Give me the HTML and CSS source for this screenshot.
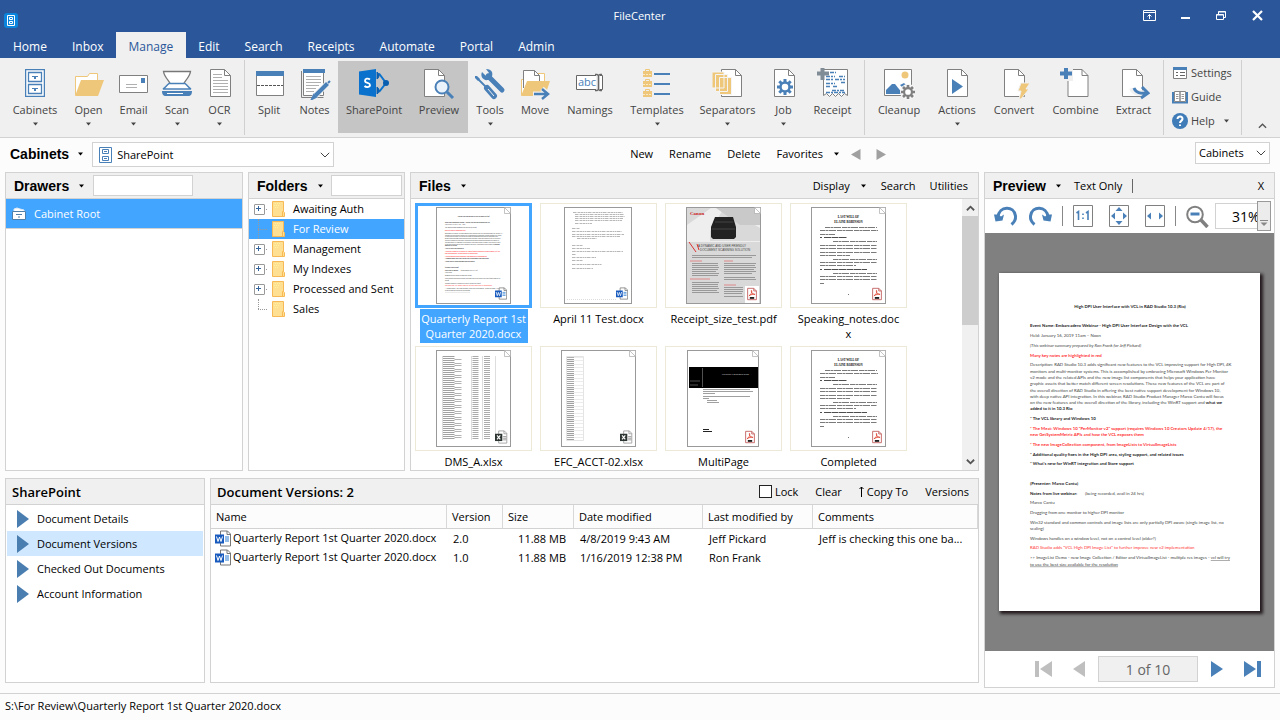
FILE: index.html
```html
<!DOCTYPE html>
<html lang="en">
<head>
<meta charset="utf-8">
<title>FileCenter</title>
<link rel="stylesheet" href="styles.css">
</head>
<body>
<svg class="defs" aria-hidden="true">
  <symbol id="doc" viewBox="0 0 32 32"><path d="M6.500 1.500h14l6 6v21h-20z" fill="#fff" stroke="#808080"/><path d="M20.500 1.500v6h6" fill="none" stroke="#808080"/></symbol>
  <symbol id="cabinet" viewBox="0 0 20 28"><path d="M.5.5h19v27H.5z" fill="#fff" stroke="#4a80b8" stroke-width="1.500"/><path d="M3.500 3.500h13v9h-13zM3.500 15.500h13v9h-13z" fill="#fff" stroke="#4a80b8" stroke-width="1.300"/><path d="M7 7.500h6M7 19.500h6" stroke="#4a80b8"/><path d="M9 8h2v2H9zM9 20h2v2H9z" fill="#4a80b8"/></symbol>
  <symbol id="cabinet-small" viewBox="0 0 13 16"><path d="M.5.500h12v15H.5zM3.500 2.500h6v4h-6zM3.500 9.500h6v4h-6zM5 4.500h3M5 11.500h3" fill="#fff" stroke="#4a80b8"/></symbol>
  <symbol id="gear" viewBox="-8 -8 16 16"><g stroke="currentColor" stroke-width="3"><path d="M0-8V8M-8 0H8M-5.700-5.700 5.700 5.700M-5.700 5.700 5.700-5.700"/></g><circle r="4.500" fill="#fff" stroke="currentColor" stroke-width="2.500"/></symbol>
  <symbol id="caret" viewBox="0 0 7 4"><path d="M1 .5h5L3.500 3.500z" fill="currentColor"/></symbol>
  <symbol id="chev" viewBox="0 0 10 6"><path d="M.8.8 5 5 9.200.8" fill="none" stroke="#444"/></symbol>
  <symbol id="folder" viewBox="0 0 13 16"><path d="M.5.500h11v10l1 1v4h-12z" fill="#ffdf91" stroke="#f6b955"/><path d="M11.500 10.500h-1v5" fill="none" stroke="#f6b955"/><path d="M3 2.500h6M2 4.500h6M3 6.500h3" stroke="#fff3a0" stroke-dasharray="1 1"/></symbol>
  <symbol id="word" viewBox="0 0 16 16"><path d="M5.500.500h7l3 3v12h-10z" fill="#fff" stroke="#777"/><path d="M12 .500v3.500h3.500" fill="none" stroke="#777"/><path d="M10 6.500h4M10 8.500h4M10 10.500h4" stroke="#2b7cd3"/><path d="M0 4h9v9H0z" fill="#185abd"/><path d="m1.500 6 1.500 5 1.500-4.500L6 11l1.500-5" fill="none" stroke="#fff"/></symbol>
  <symbol id="excel" viewBox="0 0 16 16"><path d="M4.500.500h7l3 3v12h-10z" fill="#fff" stroke="#999"/><path d="M11 .500v3.500h3.500" fill="none" stroke="#999"/><path d="M10 7.500h4M10 9.500h4M10 11.500h4" stroke="#888"/><path d="M0 4h9v9H0z" fill="#2d3533"/><path d="m2.500 6 4 5m0-5-4 5" stroke="#fff" stroke-width="1.400"/></symbol>
  <symbol id="pdf" viewBox="0 0 13 16"><path d="M1.500 1.500h7l3 3v10h-10z" fill="#fff" stroke="#c25b5b"/><path d="M8.500 1.500v3h3" fill="none" stroke="#c25b5b"/><path d="M3 10c2-1 4-4 3-6-1-1 0 5 4 4.500C8 7.500 5 9 3 10" fill="none" stroke="#e04b3a"/><path d="M4 12.500h5" stroke="#111" stroke-width="2"/></symbol>
  <symbol id="corner" viewBox="0 0 7 7"><path d="M.5.500h6v6h-6zM.5.500l6 6" fill="#fff" stroke="#aaa" stroke-width=".7"/></symbol>
  <symbol id="report" viewBox="0 0 783 1014">
    <g class="doc-text">
      <text x="393" y="105" text-anchor="middle" class="b">High DPI User Interface with VCL in RAD Studio 10.3 (Rio)</text>
      <text x="93" y="163" class="b">Event Name: Embarcadero Webinar - High DPI User Interface Design with the VCL</text>
      <text x="93" y="193">Held: January 16, 2019 11am – Noon</text>
      <text x="93" y="222" class="i">(This webinar summary prepared by Ron Frank for Jeff Pickard)</text>
      <text x="93" y="251" class="b red">Many key notes are highlighted in red</text>
      <text x="93" y="280">Description: RAD Studio 10.3 adds significant new features to the VCL improving support for High DPI, 4K</text>
      <text x="93" y="299">monitors and multi-monitor systems. This is accomplished by embracing Microsoft Windows Per Monitor</text>
      <text x="93" y="318">v2 mode and the related APIs and the new image list components that helps your application have</text>
      <text x="93" y="337">graphic assets that better match different screen resolutions. These new features of the VCL are part of</text>
      <text x="93" y="356">the overall direction of RAD Studio in offering the best native support development for Windows 10,</text>
      <text x="93" y="375">with deep native API integration. In this webinar, RAD Studio Product Manager Marco Cantu will focus</text>
      <text x="93" y="394">on the new features and the overall direction of the library, including the WinRT support and <tspan class="b">what we</tspan></text>
      <text x="93" y="412" class="b">added to it in 10.3 Rio</text>
      <text x="93" y="441" class="b">* The VCL library and Windows 10</text>
      <text x="93" y="471" class="b red">* The Meat: Windows 10 "PerMonitor v2" support (requires Windows 10 Creators Update 4/17), the</text>
      <text x="93" y="490" class="b red">new GetSystemMetric APIs and how the VCL exposes them</text>
      <text x="93" y="519" class="b red">* The new ImageCollection component, from ImageLists to VirtualImageLists</text>
      <text x="93" y="548" class="b">* Additional quality fixes in the High DPI area, styling support, and related issues</text>
      <text x="93" y="577" class="b">* What's new for WinRT integration and Store support</text>
      <text x="93" y="636" class="b">(Presenter: Marco Cantu)</text>
      <text x="93" y="665" class="b">Notes from live webinar:</text><text x="258" y="665">(being recorded, avail in 24 hrs)</text>
      <text x="93" y="694">Marco Cantu</text>
      <text x="93" y="723">Dragging from one monitor to higher DPI monitor</text>
      <text x="93" y="753">Win32 standard and common controls and image lists are only partially DPI aware (single image list, no</text>
      <text x="93" y="771">scaling)</text>
      <text x="93" y="800">Windows handles on a window level, not on a control level (older?)</text>
      <text x="93" y="829" class="red">RAD Studio adds "VCL High DPI Image List" to further improve new v2 implementation</text>
      <text x="93" y="859">&gt;&gt; ImageList Demo - new Image Collection / Editor and VirtualImageList - multiple res images - <tspan class="u">vcl will try</tspan></text>
      <text x="93" y="878" class="u">to use the best size available for the resolution</text>
    </g>
  </symbol>
  <symbol id="will" viewBox="0 0 75 97">
    <rect x=".5" y=".5" width="74" height="96" fill="#fff" stroke="#999"/>
    <g class="tiny" text-anchor="middle"><text x="37.500" y="11">LAST WILL OF</text><text x="37.500" y="16">ELAINE ROBINSON</text></g>
    <path d="M14 20.500h52M9 23.500h58M9 27.500h15M22 34.500h44M9 38.500h57M9 41.500h57M9 45.500h57M9 48.500h30M22 52.500h44M9 55.500h57M9 58.500h36M22 66.500h44M9 69.500h57M9 72.500h57M9 76.500h4" stroke="#222" stroke-dasharray="5 .5 3 .5 7 1" opacity=".6"/>
    <path d="M9 30.500h2M13 30.500h23M9 62.500h2M13 62.500h43" stroke="#222" stroke-dasharray="7 .5" opacity=".8"/>
    <path d="M37 87.500h1" stroke="#777"/>
  </symbol>
</svg>

<header class="titlebar">
  <svg class="app-icon" viewBox="0 0 14 15"><rect width="14" height="15" rx="3" fill="#0a84dc"/><path d="M3.500 2.500h7v10h-7zM5.500 4.500h3v2h-3zM5.500 8.500h3v2h-3z" fill="none" stroke="#fff"/></svg>
  <span class="app-title">FileCenter</span>
  <div class="window-buttons">
    <button aria-label="Ribbon options"><svg width="13" height="11" viewBox="0 0 13 11" fill="none" stroke="#fff"><path d="M.5.500h12v10H.5zM.5 2.500h12M6.500 9V4.500M4.500 6.500l2-2 2 2"/></svg></button>
    <button aria-label="Minimize"><svg width="13" height="11" viewBox="0 0 13 11"><path d="M2 8h9" stroke="#fff" stroke-width="2"/></svg></button>
    <button aria-label="Restore"><svg width="13" height="11" viewBox="0 0 13 11" fill="none" stroke="#fff"><path d="M1.500 4.500h7v5h-7zM1.500 5h7M3.500 4V1.500h7v6H9M3.500 2h7"/></svg></button>
    <button aria-label="Close"><svg width="13" height="11" viewBox="0 0 13 11"><path d="m2 1 9 9m0-9-9 9" stroke="#fff" stroke-width="2.200"/></svg></button>
  </div>
</header>

<nav class="tabs">
  <a href="#">Home</a><a href="#">Inbox</a><a href="#" class="active">Manage</a><a href="#">Edit</a><a href="#">Search</a><a href="#">Receipts</a><a href="#">Automate</a><a href="#">Portal</a><a href="#">Admin</a>
</nav>

<section class="ribbon">
  <div class="group group-open">
    <button><svg><use href="#cabinet" x="6" y="1" width="20" height="28"/></svg><span>Cabinets</span><svg class="caret"><use href="#caret"/></svg></button>
    <button><svg viewBox="0 0 32 32"><path d="M2.500 27V8.500h12l2-3h8v7" fill="#fff" stroke="#efc77b"/><path d="M2 28 8 12h23l-6 16z" fill="#efc77b"/></svg><span>Open</span><svg class="caret"><use href="#caret"/></svg></button>
    <button><svg viewBox="0 0 32 32"><path d="M1.500 7.500h28v17h-28z" fill="#fff" stroke="#808080"/><path d="M8 16.500h11M8 19.500h11" stroke="#b0b0b0"/><path d="M23 10h4v5h-4z" fill="#4a80b8"/></svg><span>Email</span><svg class="caret"><use href="#caret"/></svg></button>
    <button><svg viewBox="0 0 32 32"><path d="M9 15C7 12 3 8 2.500 3.500h27C29 8 25 12 23 15" fill="#fff" stroke="#777" stroke-width="1.300"/><path d="M2 21c2-1 3-3 6-5.500h16c3 2.500 4 4.500 6 5.500z" fill="#fff" stroke="#4a80b8" stroke-width="1.500"/><path d="M1 23h30c0 3-1 5-4 5H5c-3 0-4-2-4-5z" fill="#4a80b8"/><path d="M6 25.500h16" stroke="#fff"/></svg><span>Scan</span><svg class="caret"><use href="#caret"/></svg></button>
    <button><svg viewBox="0 0 32 32"><use href="#doc"/><path d="M9 6.500h9M9 9.500h9M9 12.500h15M9 15.500h15M9 18.500h15M9 21.500h15M9 24.500h15" stroke="#b0b0b0"/></svg><span>OCR</span><svg class="caret"><use href="#caret"/></svg></button>
  </div>
  <div class="group group-main">
    <button><svg viewBox="0 0 32 32"><path d="M3.500 3.500h27v24h-27z" fill="#fff" stroke="#808080"/><path d="M3 3h28v5H3z" fill="#4a80b8"/><path d="M4 17.500h26" stroke="#555" stroke-dasharray="3 1"/></svg><span>Split</span></button>
    <button><svg viewBox="0 0 32 32"><path d="M2.500 3v26.500h22" fill="none" stroke="#808080"/><path d="M4.500 1.500h20v26h-20z" fill="#fff" stroke="#808080"/><path d="M4 1h22v4H4z" fill="#4a80b8"/><path d="M7 8.500h15M7 11.500h15M7 14.500h15M7 17.500h13M7 20.500h10M7 23.500h8" stroke="#b0b0b0"/><path d="m15 29 14-14" stroke="#f0f0f0" stroke-width="6"/><path d="m16.500 27.500 12-12" stroke="#4a80b8" stroke-width="4"/><path d="m29 15 2-2M13 31l2-4 2 2z" stroke="#4a80b8" stroke-width="2"/></svg><span>Notes</span></button>
    <button class="on"><svg viewBox="0 0 32 32"><path d="M1 3.500 18 1v28L1 26.500z" fill="#0a72cc"/><path d="M21 5.500 28 15l-7 9" fill="none" stroke="#0a72cc" stroke-width="2"/><circle cx="28" cy="15" r="3" fill="#0a5eb0"/><path d="M19 4a4 4 0 0 1 0 7zM19 19a4 4 0 0 1 0 7z" stroke="#0a5eb0" fill="#0a5eb0"/><path d="M12 11.500c-2-1.500-5-1-5 1.200 0 3 5 1.500 5 4.300 0 2.500-4 2.500-5.500 1" fill="none" stroke="#fff" stroke-width="1.800"/></svg><span>SharePoint</span></button>
    <button class="on"><svg viewBox="0 0 32 32"><use href="#doc" x="-5"/><circle cx="19" cy="19" r="6.500" fill="#eaf2fb" stroke="#4a80b8" stroke-width="2"/><path d="m24 24 6 6" stroke="#4a80b8" stroke-width="3"/></svg><span>Preview</span></button>
    <button><svg viewBox="0 0 32 32"><path d="m3 10 10 10" stroke="#4a80b8" stroke-width="1.800"/><path d="m1 8 2 0 3 3-2 2-3-3z" fill="#4a80b8"/><path d="m13 20 7 8" stroke="#4a80b8" stroke-width="6" stroke-linecap="round"/><path d="m14 21 6 7" stroke="#f0f0f0" stroke-width="1"/><path d="m15 9 13 13" stroke="#f0f0f0" stroke-width="8"/><path d="m14 8 14 14" stroke="#4a80b8" stroke-width="5" stroke-linecap="round"/><path d="M8 4c-2 4 1 9 6 8 4-1 5-5 4-8-1-2-3-3-6-3l3 4-3 3z" fill="#4a80b8"/></svg><span>Tools</span><svg class="caret"><use href="#caret"/></svg></button>
    <button><svg viewBox="0 0 32 32"><path d="M2.500 27V11.500h6v-6h17v8" fill="#fff" stroke="#efc77b"/><path d="M4.500 20V2.500h11l5 5v6" fill="#fff" stroke="#808080"/><path d="M15.500 2.500v5h5" fill="none" stroke="#808080"/><path d="m2 28 6-15h23l-5 15z" fill="#efc77b"/><path d="M14 26h15m-6-5.500 6 5.500-6 5.500" fill="none" stroke="#f0f0f0" stroke-width="5"/><path d="M15 26h14m-6-5 6 5-6 5" fill="none" stroke="#4a80b8" stroke-width="2.500"/></svg><span>Move</span></button>
    <button><svg viewBox="0 0 32 32"><path d="M2.500 7.500h26v14h-26z" fill="#fff" stroke="#666"/><text x="4" y="18" class="abc">abc</text><path d="M24 7v15" stroke="#f0f0f0" stroke-width="4"/><path d="M24.500 7v15M21 6.500h2l1.500 1 1.500-1h2M21 22.500h2l1.500-1 1.500 1h2" fill="none" stroke="#666" stroke-width="1.500"/></svg><span>Namings</span></button>
    <button><svg viewBox="0 0 32 32"><g fill="#efc77b"><path d="M2 3h9v6H2zM2 13h9v6H2zM2 23h9v6H2z"/><path d="M4.500 3.500v-2h4v2M4.500 13.500v-2h4v2M4.500 23.500v-2h4v2" fill="none" stroke="#efc77b"/></g><path d="M2 6.500h9M2 16.500h9M2 26.500h9" stroke="#fbe8c4" stroke-dasharray="2 1"/><path d="M13 6h16M13 16h16M13 26h16" stroke="#4a80b8" stroke-width="2"/></svg><span>Templates</span><svg class="caret"><use href="#caret"/></svg></button>
    <button><svg viewBox="0 0 32 32"><use href="#doc" x="3"/><g fill="#efc77b" stroke="#f4f4f4"><path d="M0 4h12v16H0zM3.500 6.500h12v17h-12zM7.500 9.500h12v17h-12z"/></g></svg><span>Separators</span><svg class="caret"><use href="#caret"/></svg></button>
    <button><svg viewBox="0 0 32 32" class="blue"><use href="#doc"/><use href="#gear" x="9" y="11" width="16" height="16"/></svg><span>Job</span><svg class="caret"><use href="#caret"/></svg></button>
    <button><svg viewBox="0 0 32 32"><path d="M6.500 1.500h24v26l-3-2-3 3-3-3-3 3-3-3-3 3-3-3-3 2z" fill="#fff" stroke="#808080"/><path d="M13 4.500h6M9 8.500h9m4 0h6M9 11.500h7m2 0h10M9 15.500h9M9 18.500h5m2 0h4m4-4h4M15 22.500h13M9 24.500h19" stroke="#4a80b8" stroke-width="1.500" stroke-dasharray="4 1 2 1"/><path d="M5.500 0v12M0 5.500h12" stroke="#808c96" stroke-width="4"/></svg><span>Receipt</span></button>
  </div>
  <div class="group group-process">
    <button><svg viewBox="0 0 32 32" class="gray"><path d="M1.500 1.500h27v26h-27z" fill="#fff" stroke="#808080"/><circle cx="22" cy="7" r="3.500" fill="#efc77b"/><path d="M3 26v-4l6-6h3l8 10z" fill="#4a80b8"/><path d="m17 17 4-2 3 3-4 2z" fill="#4a80b8"/><circle cx="25" cy="24" r="8" fill="#f6f6f6"/><use href="#gear" x="18" y="17" width="14" height="14"/></svg><span>Cleanup</span></button>
    <button><svg viewBox="0 0 32 32"><use href="#doc"/><path d="m11 11 11 7.500L11 26z" fill="#4a80b8"/></svg><span>Actions</span><svg class="caret"><use href="#caret"/></svg></button>
    <button><svg viewBox="0 0 32 32"><use href="#doc"/><path d="M23 15h9l-4 6h3l-8 10h-2l2-8h-3z" fill="#efc77b" stroke="#f0f0f0"/></svg><span>Convert</span></button>
    <button><svg viewBox="0 0 32 32"><use href="#doc" x="1.500"/><path d="M0 0h13v13H0z" fill="#f0f0f0"/><path d="M6 0v11M0 5.500h12" stroke="#4a80b8" stroke-width="4"/></svg><span>Combine</span></button>
    <button><svg viewBox="0 0 32 32"><use href="#doc" x="-2"/><path d="M14 20c2 5 6 6 13 5" fill="none" stroke="#f0f0f0" stroke-width="6"/><path d="M16 20c2 5 6 5.500 13 5m-5-6 6 6-7 5" fill="none" stroke="#4a80b8" stroke-width="3"/></svg><span>Extract</span></button>
  </div>
  <div class="group group-help">
    <button><svg viewBox="0 0 16 14"><path d="M1.500 1.500h13v11h-13z" fill="#fff" stroke="#808080"/><path d="M1 1h14v3H1z" fill="#4a80b8"/><path d="M4 6.500h2M4 9.500h2M8 6.500h5M8 9.500h5" stroke="#666"/></svg><span>Settings</span></button>
    <button><svg viewBox="0 0 16 14"><path d="M1 2v10.500h14V2" fill="none" stroke="#4a80b8" stroke-width="2"/><path d="M2.500 1.500h5.500v10H2.500zM8 1.500h5.500v10H8z" fill="#fff" stroke="#888"/><path d="M4 4.500h2.500M4 6.500h2.500M4 8.500h2.500M9.500 4.500H12M9.500 6.500H12M9.500 8.500H12" stroke="#999"/></svg><span>Guide</span></button>
    <button><svg viewBox="0 0 16 16"><circle cx="8" cy="8" r="8" fill="#3f7cb8"/><path d="M5.500 6c0-3.500 5.500-3 5 0C10.200 8 8 7.800 8 10m0 1.500V13" fill="none" stroke="#fff" stroke-width="2"/></svg><span>Help</span><svg class="caret"><use href="#caret"/></svg></button>
  </div>
  <button class="collapse" aria-label="Collapse ribbon"><svg width="9" height="6" viewBox="0 0 10 6"><path d="M1 5 5 1l4 4" fill="none" stroke="#555" stroke-width="1.500"/></svg></button>
</section>

<section class="location">
  <button class="heading">Cabinets<svg class="caret"><use href="#caret"/></svg></button>
  <label class="combo combo-cabinet"><svg class="combo-icon"><use href="#cabinet-small"/></svg><select aria-label="Cabinet"><option>SharePoint</option></select><svg class="chev"><use href="#chev"/></svg></label>
  <div class="commands">
    <button>New</button><button>Rename</button><button>Delete</button><button class="with-caret">Favorites<svg class="caret"><use href="#caret"/></svg></button>
    <div class="history">
      <button aria-label="Back"><svg width="10" height="11" viewBox="0 0 10 11"><path d="M9.500 0v11L0 5.500z" fill="#a0a0a0"/></svg></button>
      <button aria-label="Forward"><svg width="10" height="11" viewBox="0 0 10 11"><path d="M.5 0v11L10 5.500z" fill="#a0a0a0"/></svg></button>
    </div>
  </div>
  <label class="combo combo-view"><select aria-label="View"><option>Cabinets</option></select><svg class="chev"><use href="#chev"/></svg></label>
</section>

<main class="workspace">
  <div class="left">
    <div class="top-row">
      <section class="panel">
        <div class="panel-head"><button class="heading">Drawers<svg class="caret"><use href="#caret"/></svg></button><input class="drawer-filter" type="text" aria-label="Filter drawers"></div>
        <button class="drawer"><svg width="14" height="15" viewBox="0 0 14 15"><path d="M2 6V3l3-1 3 1 4 1v2" fill="#fff" stroke="#dfe9f5"/><path d="M.5 5.500h13v8H.5z" fill="#fff" stroke="#4f7fa8"/><path d="M4 8.500h6M7 10v2" stroke="#4f7fa8"/></svg>Cabinet Root</button>
      </section>

      <section class="panel">
        <div class="panel-head"><button class="heading">Folders<svg class="caret"><use href="#caret"/></svg></button><input class="folder-filter" type="text" aria-label="Filter folders"></div>
        <ul class="tree">
          <li><i class="plus"></i><svg><use href="#folder"/></svg>Awaiting Auth</li>
          <li class="selected"><i></i><svg><use href="#folder"/></svg>For Review</li>
          <li><i class="plus"></i><svg><use href="#folder"/></svg>Management</li>
          <li><i class="plus"></i><svg><use href="#folder"/></svg>My Indexes</li>
          <li><i class="plus"></i><svg><use href="#folder"/></svg>Processed and Sent</li>
          <li><i class="last"></i><svg><use href="#folder"/></svg>Sales</li>
        </ul>
      </section>

      <section class="panel">
        <div class="panel-head"><button class="heading">Files<svg class="caret"><use href="#caret"/></svg></button>
          <div class="file-commands"><button class="with-caret">Display<svg class="caret"><use href="#caret"/></svg></button><button>Search</button><button>Utilities</button></div></div>
        <div class="files-body">
          <div class="files">
            <figure class="selected"><div class="thumb"><svg viewBox="0 0 75 97"><rect x=".5" y=".5" width="74" height="96" fill="#fff" stroke="#999"/><use href="#report" width="75" height="97"/><use href="#corner" x="68" width="7" height="7"/><use href="#word" x="59" y="80" width="12" height="13"/></svg></div><figcaption>Quarterly Report 1st Quarter 2020.docx</figcaption></figure>
            <figure><div class="thumb"><svg viewBox="0 0 75 97"><rect x="3.500" y=".5" width="67" height="96" fill="#fff" stroke="#999"/><g stroke="#888" stroke-width=".6" stroke-dasharray="3 .5 1 .5 2 .5"><path d="M12 5.500h50M14 7.500h49M14 9.500h50M14 11.500h48M14 13.500h47M14 16.500h17M11 21.500h8M11 24.500h50M11 27.500h52M11 29.500h48M16 31.500h20M11 38.500h11M11 41.500h18M11 44.500h51M11 47.500h4M11 50.500h24M11 53.500h11M11 57.500h30M11 61.500h21"/></g><path d="M6 92.500h50" stroke="#ddd" stroke-dasharray="1 1"/><use href="#word" x="55" y="80" width="12" height="13"/></svg></div><figcaption>April 11 Test.docx</figcaption></figure>
            <figure><div class="thumb"><svg viewBox="0 0 75 97"><rect x=".5" y=".5" width="74" height="96" fill="#d9d9d9" stroke="#999"/><path d="m1 18 24-17h13L24 24v10h50V1H40l34 20v14H1z" fill="#eee"/><path d="M30 1h44v17H54z" fill="#c9c9c9"/><text x="4" y="8" class="canon">Canon</text><path d="M29 10h18l3 10v10l-2 2H27l-2-2V20z" fill="#222"/><path d="M29 15h18M26 22h23" stroke="#555" stroke-width=".7"/><path d="m3 35 7 10m1-8 2 6" stroke="#d33"/><text x="12" y="40" class="ad">A DYNAMIC AND USER FRIENDLY</text><text x="14" y="44" class="ad">DOCUMENT SCANNING SOLUTION</text><path d="M6 48.500h64M6 50.500h60M6 56.500h26M6 58.500h26M6 60.500h27M6 62.500h26M6 64.500h24M6 66.500h27M6 68.500h26M6 75.500h27M6 77.500h26M6 79.500h26M6 81.500h27M6 83.500h25M6 85.500h27M38 56.500h32M38 58.500h31M38 60.500h32M38 62.500h30M38 64.500h32M38 66.500h28M38 70.500h31M38 72.500h32M38 80.500h19M38 82.500h19M38 84.500h19M38 86.500h18M38 89.500h19" stroke="#999"/><path d="M4 54h12M38 54h9M4 72h20M38 78h12" stroke="#d88"/><rect x="59" y="79" width="14" height="17" fill="#fff"/><use href="#corner" x="68" width="7" height="7"/><use href="#pdf" x="60" y="80" width="12" height="14"/></svg></div><figcaption>Receipt_size_test.pdf</figcaption></figure>
            <figure><div class="thumb"><svg viewBox="0 0 75 97"><use href="#will" width="75" height="97"/><use href="#corner" x="68" width="7" height="7"/><use href="#pdf" x="60" y="80" width="12" height="14"/></svg></div><figcaption>Speaking_notes.doc<wbr>x</figcaption></figure>
            <figure><div class="thumb"><svg viewBox="0 0 75 97"><rect x=".5" y=".5" width="74" height="96" fill="#fff" stroke="#999"/><g stroke="#444" fill="none"><path d="M12.500 6v84" stroke-width="12" stroke-dasharray="1 1" opacity=".5"/><path d="M22 9v80" stroke-width="7" stroke-dasharray="1 3 1 1" opacity=".4"/><path d="M39.500 6v84" stroke-width="6" stroke-dasharray="1 1" opacity=".45"/><path d="M51 6v84" stroke-width="6" stroke-dasharray="1 1" opacity=".45"/><path d="M6.500 6v84M35.500 6v84M46.500 6v84M59.500 6v84" stroke="#ddd"/></g><use href="#corner" x="68" width="7" height="7"/><use href="#excel" x="59" y="80" width="13" height="14"/></svg></div><figcaption>DMS_A.xlsx</figcaption></figure>
            <figure><div class="thumb"><svg viewBox="0 0 75 97"><rect x=".5" y=".5" width="74" height="96" fill="#fff" stroke="#999"/><path d="M9.500 7v83" stroke="#444" stroke-width="7" stroke-dasharray="1 1" opacity=".5"/><path d="M14 7v83" stroke="#ccc" stroke-width="17" stroke-dasharray=".5 3" opacity=".7"/><path d="M5.500 6.500h17v84h-17z" fill="none" stroke="#e4e4e4"/><use href="#corner" x="68" width="7" height="7"/><use href="#excel" x="59" y="80" width="13" height="14"/></svg></div><figcaption>EFC_ACCT-02.xlsx</figcaption></figure>
            <figure><div class="thumb"><svg viewBox="0 0 75 97"><rect x="1.500" y=".5" width="71" height="96" fill="#fff" stroke="#999"/><path d="M3 17h69v21H3z" fill="#000"/><path d="M16.500 18v19M4 31h10M4 35h8" stroke="#888" stroke-width=".6"/><text x="36" y="25" class="guide">FileCenter 9 Evaluator's Guide</text><path d="M17 39.500h47M17 41.500h50M17 43.500h12M17 46.500h47M17 48.500h6M21 50.500h10M21 52.500h12" stroke="#777" stroke-width=".7"/><path d="M17 79.500h6M17 81.500h9" stroke="#222"/><use href="#corner" x="66" width="7" height="7"/><use href="#pdf" x="58" y="80" width="12" height="14"/></svg></div><figcaption>MultiPage</figcaption></figure>
            <figure><div class="thumb"><svg viewBox="0 0 75 97"><use href="#will" width="75" height="97"/><use href="#corner" x="68" width="7" height="7"/><use href="#pdf" x="60" y="80" width="12" height="14"/></svg></div><figcaption>Completed</figcaption></figure>
          </div>
          <div class="scrollbar">
            <button aria-label="Scroll up"><svg width="9" height="6" viewBox="0 0 10 6"><path d="M1 5.500 5 1.500l4 4" fill="none" stroke="#555" stroke-width="2"/></svg></button>
            <div class="track"><div class="grip"></div></div>
            <button aria-label="Scroll down"><svg width="9" height="6" viewBox="0 0 10 6"><path d="M1 .5 5 4.500l4-4" fill="none" stroke="#555" stroke-width="2"/></svg></button>
          </div>
        </div>
      </section>
    </div>

    <div class="bottom-row">
      <section class="panel">
        <div class="panel-head"><h2>SharePoint</h2></div>
        <nav class="links">
          <a href="#">Document Details</a><a href="#" class="current">Document Versions</a><a href="#">Checked Out Documents</a><a href="#">Account Information</a>
        </nav>
      </section>
      <section class="panel">
        <div class="panel-head"><h2>Document Versions: 2</h2>
          <div class="version-commands"><label class="lock"><input type="checkbox">Lock</label><button>Clear</button><button class="copy"><svg width="5" height="11" viewBox="0 0 5 11"><path d="M2.500 11V1M.5 3l2-2 2 2" fill="none" stroke="#000"/></svg>Copy To</button><button>Versions</button></div></div>
        <table>
          <colgroup><col class="c-name"><col class="c-version"><col class="c-size"><col class="c-date"><col class="c-by"><col></colgroup>
          <thead><tr><th>Name</th><th>Version</th><th>Size</th><th>Date modified</th><th>Last modified by</th><th>Comments</th></tr></thead>
          <tbody>
            <tr><td class="name"><svg><use href="#word"/></svg>Quarterly Report 1st Quarter 2020.docx</td><td>2.0</td><td class="size">11.88 MB</td><td>4/8/2019 9:43 AM</td><td>Jeff Pickard</td><td>Jeff is checking this one ba...</td></tr>
            <tr><td class="name"><svg><use href="#word"/></svg>Quarterly Report 1st Quarter 2020.docx</td><td>1.0</td><td class="size">11.88 MB</td><td>1/16/2019 12:38 PM</td><td>Ron Frank</td><td></td></tr>
          </tbody>
        </table>
      </section>
    </div>
  </div>

  <section class="panel preview">
    <div class="panel-head"><button class="heading">Preview<svg class="caret"><use href="#caret"/></svg></button><button class="text-only">Text Only</button><i class="bar"></i><button class="close" aria-label="Close preview">X</button></div>
    <div class="preview-tools">
      <button aria-label="Rotate left"><svg width="24" height="24" viewBox="0 0 24 24"><path d="M4 13C5 2 20 1 21.500 12c.3 3-.8 6-4 8.500" fill="none" stroke="#4a80b8" stroke-width="3"/><path d="M0 10.500h4l3 2 3-2-1.500 6-7 1z" fill="#4a80b8"/></svg></button>
      <button aria-label="Rotate right"><svg width="24" height="24" viewBox="0 0 24 24"><path d="M20 13C19 2 4 1 2.500 12c-.3 3 .8 6 4 8.500" fill="none" stroke="#4a80b8" stroke-width="3"/><path d="M24 10.500h-4l-3 2-3-2 1.500 6 7 1z" fill="#4a80b8"/></svg></button>
      <i class="bar"></i>
      <button aria-label="Actual size"><svg width="20" height="22" viewBox="0 0 20 22"><path d="M.5.500h19v21H.5z" fill="#fff" stroke="#808080"/><path d="m3.500 8 2-1.500V15M13 8l2-1.500V15" fill="none" stroke="#4a80b8" stroke-width="1.600"/><path d="M9.200 8.500h1.600v1.600H9.200zM9.200 12.500h1.600v1.600H9.200z" fill="#4a80b8"/></svg></button>
      <button class="fit" aria-label="Fit page"><svg width="20" height="22" viewBox="0 0 20 22"><path d="M.5.500h19v21H.5z" fill="#fff" stroke="#808080"/><path d="m10 2 3.500 4h-7zM10 20l3.500-4h-7zM2 11l4-3.500v7zM18 11l-4-3.500v7z" fill="#4a80b8"/></svg></button>
      <button class="fit" aria-label="Fit width"><svg width="20" height="22" viewBox="0 0 20 22"><path d="M.5.500h19v21H.5z" fill="#fff" stroke="#808080"/><path d="m2 11 4-3.500v7zM18 11l-4-3.500v7z" fill="#4a80b8"/></svg></button>
      <i class="bar"></i>
      <button aria-label="Zoom out"><svg width="23" height="23" viewBox="0 0 23 23"><circle cx="9" cy="9.500" r="7.800" fill="#fff" stroke="#808080" stroke-width="2"/><path d="M4.500 9h9" stroke="#4a80b8" stroke-width="3"/><path d="m15 15 6.500 7" stroke="#808080" stroke-width="3.500"/></svg></button>
      <div class="zoom"><input type="text" value="31%" aria-label="Zoom"><button class="more" aria-label="More tools"><svg width="8" height="6" viewBox="0 0 8 6"><path d="M0 .5h8" stroke="#888"/><path d="M.5 2.500h7L4 6z" fill="#888"/></svg></button></div>
    </div>
    <div class="canvas"><svg class="page" viewBox="0 0 783 1014"><use href="#report"/></svg></div>
    <div class="pager">
      <button aria-label="First page"><svg width="17" height="16" viewBox="0 0 17 16"><path d="M0 0h4v16H0zM17 0v16L5 8z" fill="#bfbfbf"/></svg></button>
      <button aria-label="Previous page"><svg width="12" height="16" viewBox="0 0 12 16"><path d="M12 0v16L0 8z" fill="#bfbfbf"/></svg></button>
      <input type="text" value="1 of 10" aria-label="Page">
      <button aria-label="Next page"><svg width="12" height="16" viewBox="0 0 12 16"><path d="M0 0v16l12-8z" fill="#4a80b8"/></svg></button>
      <button aria-label="Last page"><svg width="17" height="16" viewBox="0 0 17 16"><path d="M13 0h4v16h-4zM0 0v16l12-8z" fill="#4a80b8"/></svg></button>
    </div>
  </section>
</main>

<footer class="status">S:\For Review\Quarterly Report 1st Quarter 2020.docx</footer>
</body>
</html>
```
FILE: styles.css
```css
* { box-sizing: border-box; }
body {
  margin: 0;
  height: 100vh;
  min-height: 600px;
  display: flex;
  flex-direction: column;
  background: #fcfcfc;
  color: #000;
  font: 11px/16px "Open Sans", sans-serif;
}
button, input, select { font: inherit; color: inherit; }
button { border: 0; padding: 0; background: none; white-space: nowrap; }
a { color: inherit; text-decoration: none; }
.defs { position: absolute; width: 0; height: 0; }
.caret { width: 7px; height: 4px; flex: none; }
.b { font-weight: 700; fill: #222; }
.i { font-style: italic; }
.u { text-decoration: underline; }
.red { fill: #f33; }
.doc-text { font: 13px Lato, sans-serif; fill: #444; }
.tiny { font: 700 3px "Liberation Serif", serif; }
.canon { font: 700 5px "Liberation Serif", serif; fill: #c22; }
.ad { font: 3px "Liberation Sans", sans-serif; fill: #444; }
.guide { font: 2px "Liberation Sans", sans-serif; fill: #ddd; }
.abc { font: 11px "Open Sans", sans-serif; fill: #4a80b8; }
.blue { color: #4a80b8; }
.gray { color: #808080; }

.titlebar {
  display: grid;
  grid-template-columns: 1fr auto 1fr;
  align-items: start;
  flex: none;
  height: 32px;
  padding: 0 5px 0 4px;
  background: #2b579a;
  color: #fff;
}
.app-icon { width: 14px; height: 15px; margin-top: 13px; }
.app-title { padding-top: 8px; }
.window-buttons { display: flex; justify-content: flex-end; }
.window-buttons button { width: 36px; height: 31px; display: grid; place-items: center; }

.tabs { display: flex; flex: none; background: #2b579a; color: #fff; height: 26px; padding-left: 1px; font-size: 12px; }
.tabs a { padding: 7px 13px 0 12px; }
.tabs .active { background: #f0f0f0; color: #2b579a; }

.ribbon {
  display: flex;
  flex: none;
  height: 80px;
  padding: 2px 0 2px 4px;
  background: #f0f0f0;
  border-bottom: 1px solid #d2d2d2;
  color: #444;
}
.group { display: grid; border-right: 1px solid #d0d0d0; }
.group-open { grid-template-columns: 62px 45px 45px 42px 43px; padding-right: 3px; margin-right: 2px; }
.group-main { grid-template-columns: 44px 47px 72px 58px 44px 46px 64px 70px 71px 41px 57px; padding-right: 3px; margin-right: 3px; }
.group-process { grid-template-columns: 62px 54px 60px 63px 53px; padding-right: 3px; }
.group:not(.group-help) button { display: flex; flex-direction: column; align-items: center; justify-content: flex-start; padding-top: 7px; height: 72px; margin-top: 1px; }
.group button svg:not(.caret) { width: 32px; height: 32px; flex: none; }
.group button span { margin-top: 2px; }
.group:not(.group-help) .caret { margin-top: 4px; }
.group button.on { background: #c5c5c5; }
.group-help { width: 78px; padding: 1px 0 0 8px; grid-auto-rows: 24px; }
.group-help button { display: flex; align-items: center; gap: 3px; }
.group.group-help button svg:not(.caret) { width: 16px; height: 16px; }
.group-help button span { margin: 0; }
.group-help .caret { margin-left: 5px; }
.collapse { margin-left: auto; padding: 0 13px 6px; display: flex; align-items: flex-end; }

.location { display: flex; flex: none; align-items: flex-start; height: 34px; padding: 4px 10px 0; }
.heading { display: flex; align-items: center; gap: 8px; font: 700 14px/24px "Liberation Sans", sans-serif; }
.combo { display: flex; align-items: center; background: #fff; border: 1px solid #d2d2d2; }
.combo select { flex: 1; appearance: none; border: 0; background: none; padding: 0; min-width: 0; }
.chev { width: 10px; height: 6px; flex: none; }
.combo-cabinet { width: 242px; height: 25px; margin-left: 8px; padding: 0 3px 0 6px; gap: 5px; }
.combo-icon { width: 13px; height: 16px; }
.combo-view { width: 75px; height: 22px; margin-left: auto; padding: 0 3px; }
.commands { display: flex; align-items: center; height: 24px; margin-left: 296px; gap: 16px; }
.with-caret { display: flex; align-items: center; gap: 10px; }
.history { display: flex; gap: 15px; margin-left: -5px; }
.history button { display: grid; }

.workspace { flex: 1; display: flex; gap: 5px; padding: 0 5px 5px; min-height: 0; }
.left { flex: 1; min-width: 0; display: grid; grid-template-rows: minmax(0, 299fr) minmax(0, 205fr); gap: 7px; padding-bottom: 5px; }
.top-row { display: grid; grid-template-columns: 238px 157px minmax(0, 1fr); grid-template-rows: minmax(0, 1fr); gap: 5px; }
.bottom-row { display: grid; grid-template-columns: 200px minmax(0, 1fr); gap: 5px; }
.panel { display: flex; flex-direction: column; background: #fff; border: 1px solid #d2d2d2; min-height: 0; min-width: 0; }
.panel-head { display: flex; align-items: center; flex: none; height: 26px; padding: 0 8px; background: #f0f0f0; border-bottom: 1px solid #d2d2d2; }
.panel-head input[type=text] { height: 21px; border: 1px solid #d2d2d2; background: #fff; padding: 0 4px; }
.panel-head .heading { gap: 9px; }
.drawer-filter { width: 100px; margin-left: 8px; }
.folder-filter { flex: 1; min-width: 0; margin: 0 -6px 0 7px; }
h2 { margin: 0 0 0 -2px; font: 600 13px/16px "Open Sans", sans-serif; }
.drawer { display: flex; align-items: center; gap: 8px; height: 30px; padding-left: 6px; background: #42a5ff; color: #fff; border-bottom: 1px solid #d2d2d2; }

.tree { list-style: none; margin: 0; padding: 0; }
.tree li { display: flex; align-items: center; height: 20px; padding-left: 4px; white-space: nowrap; }
.tree svg { width: 13px; height: 16px; margin: 0 8px 0 5px; flex: none; }
.tree .selected { background: #42a5ff; color: #fff; }
.tree i { position: relative; width: 14px; height: 20px; flex: none; }
.tree i::before { content: ""; position: absolute; left: 5px; top: 0; bottom: 0; border-left: 1px dotted #999; }
.tree i.last::before { bottom: 10px; }
.tree i::after { content: ""; position: absolute; left: 5px; right: 0; top: 10px; border-top: 1px dotted #999; }
.tree .plus { background: linear-gradient(#35649c, #35649c) 3px 9px / 5px 1px no-repeat, linear-gradient(#35649c, #35649c) 5px 7px / 1px 5px no-repeat; }
.tree .plus::after { left: 11px; }
.tree .plus::before { left: 1px; top: 5px; bottom: auto; width: 9px; height: 9px; border: 1px solid #999; border-radius: 1px; }

.file-commands { display: flex; margin-left: auto; gap: 14px; padding-right: 2px; }
.files-body { display: flex; flex: 1; min-height: 0; }
.files { flex: 1; overflow: hidden; display: grid; grid-template-columns: repeat(auto-fill, 117px); grid-auto-rows: 135px; gap: 8px; padding: 4px; align-content: start; }
.files figure { margin: 0; display: flex; flex-direction: column; align-items: center; }
.thumb { flex: none; width: 117px; height: 105px; border: 1px solid #ece9d8; display: grid; place-items: center; background: #fff; }
.thumb svg { width: 75px; height: 97px; }
.files .selected .thumb { border: 3px solid #42a5ff; }
figcaption { max-width: 108px; margin-top: 2px; padding: 1px; line-height: 15px; text-align: center; }
.files .selected figcaption { background: #42a5ff; color: #fff; padding: 2px 1px; margin-top: 1px; }
.scrollbar { width: 16px; background: #f0f0f0; display: flex; flex-direction: column; }
.scrollbar button { height: 17px; display: grid; place-items: center; }
.track { flex: 1; }
.grip { height: 46%; background: #cdcdcd; }

.links { display: flex; flex-direction: column; padding: 1px; }
.links a { display: flex; align-items: center; gap: 8px; height: 25px; padding-left: 10px; }
.links a::before { content: ""; border-left: 12px solid #4a7db0; border-top: 9px solid transparent; border-bottom: 9px solid transparent; }
.links .current { background: #cfe8ff; }
.version-commands { display: flex; align-items: center; margin-left: auto; gap: 17px; padding-right: 1px; }
.lock { display: flex; align-items: center; gap: 3px; }
.lock input { appearance: none; width: 13px; height: 13px; margin: 0; border: 1px solid #222; background: #fff; }
.lock input:checked { background: #4a80b8; }
.copy { display: flex; align-items: center; gap: 3px; }
table { width: 100%; table-layout: fixed; border-collapse: separate; border-spacing: 0; }
.c-name { width: 236px; }
.c-version { width: 56px; }
.c-size { width: 71px; }
.c-date { width: 129px; }
.c-by { width: 110px; }
th { height: 24px; padding: 0 5px; text-align: left; font-weight: 400; background: #fcfcfc; border-right: 1px solid #d8d8d8; border-bottom: 1px solid #d2d2d2; white-space: nowrap; }
td { height: 19px; padding: 0 6px; white-space: nowrap; overflow: hidden; text-overflow: ellipsis; }
td.name { padding: 0 0 0 4px; }
td.name svg { width: 16px; height: 17px; margin-right: 2px; vertical-align: middle; }
td.size { text-align: right; padding-right: 8px; }

.preview { width: 291px; flex: none; }
.bar { width: 1px; height: 14px; background: #666; flex: none; }
.text-only { margin: 0 10px 0 12px; }
.close { margin-left: auto; padding-right: 2px; }
.preview-tools { display: flex; align-items: center; gap: 10px; height: 34px; flex: none; padding: 0 3px 0 9px; }
.preview-tools button { display: grid; }
.preview-tools .fit { margin-left: 6px; }
.preview-tools .bar { height: 20px; background: #888; }
.zoom { display: flex; margin-left: -4px; }
.zoom input { width: 42px; height: 26px; margin: 2px 0; border: 1px solid #d2d2d2; border-right: 0; padding: 0 0 0 16px; font: 14px/20px "Open Sans", sans-serif; }
.preview-tools .more { width: 14px; height: 30px; border: 1px solid #999; background: #ececec; place-items: end center; padding-bottom: 4px; }
.canvas { flex: 1; background: #808080; display: grid; place-items: center; min-height: 0; }
.page { width: 261px; height: 338px; background: #fff; box-shadow: 2px 2px 3px 1px #231a1e; }
.pager { display: flex; align-items: center; justify-content: flex-end; height: 36px; flex: none; padding-right: 13px; }
.pager button { display: grid; margin-left: 21px; }
.pager button:first-child { margin-left: 0; }
.pager input { width: 100px; height: 26px; margin: 0 -8px 0 13px; border: 1px solid #d2d2d2; background: #f0f0f0; color: #666; text-align: center; padding: 0; font: 14px/20px "Open Sans", sans-serif; }

.status { flex: none; height: 27px; padding: 4px 5px; border-top: 1px solid #d2d2d2; }
```
